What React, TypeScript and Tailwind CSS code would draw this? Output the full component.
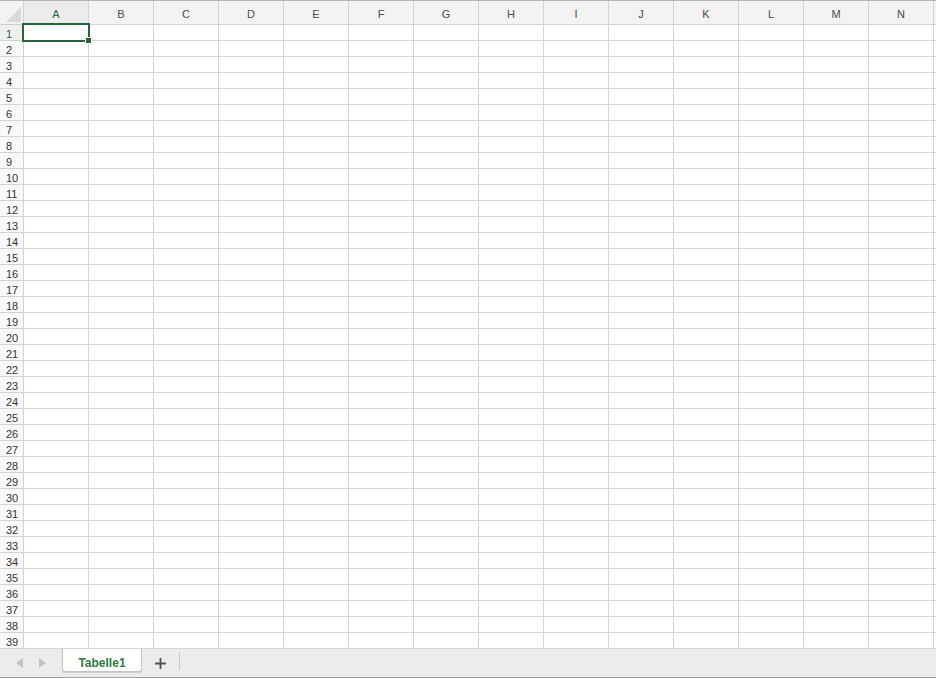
import React from "react";

const COLS = ["A","B","C","D","E","F","G","H","I","J","K","L","M","N",""];
const ROWS = Array.from({ length: 39 }, (_, i) => i + 1);

export default function App() {
  return (
    <div
      className="relative w-[936px] h-[678px] overflow-hidden bg-white flex flex-col"
      style={{ fontFamily: '"Liberation Sans", Arial, sans-serif' }}
    >
      {/* header row */}
      <div className="flex h-[25px] shrink-0 border-t border-[#b4b4b4] bg-[#f3f3f3]">
        <div className="relative w-[24px] shrink-0 border-r border-b border-[#cfcfcf] bg-[#f3f3f3]">
          <svg className="absolute right-[2px] bottom-[2px]" width="15" height="15" viewBox="0 0 15 15">
            <polygon points="15,0 15,15 0,15" fill="#d9d9d9" />
          </svg>
        </div>
        {COLS.map((c, i) => (
          <div
            key={i}
            className={`w-[65px] shrink-0 border-r border-b border-[#d2d2d2] flex items-center justify-center pt-[3px] text-[11px] ${
              i === 0 ? "text-[#22663a] bg-[#ececec]" : "text-[#4a4a4a]"
            }`}
          >
            {c}
          </div>
        ))}
      </div>

      {/* rows */}
      <div className="flex flex-col shrink-0">
        {ROWS.map((r) => (
          <div key={r} className="flex h-[16px]">
            <div
              className={`w-[24px] shrink-0 border-r border-b border-[#d2d2d2] flex items-center pl-[6px] pt-[3px] text-[11px] leading-none ${
                r === 1 ? "text-[#22663a] bg-[#efefef]" : "text-[#333] bg-[#f9f9f9]"
              }`}
            >
              {r}
            </div>
            {COLS.map((c, i) => (
              <div key={i} className="w-[65px] shrink-0 border-r border-b border-[#d6d6d6]" />
            ))}
          </div>
        ))}
      </div>

      {/* tab bar */}
      <div className="flex-1 bg-[#ececec] border-b border-[#9e9e9e] flex items-start relative">
        <div className="flex items-center h-[28px] w-[62px] shrink-0 pl-[16px] gap-[14px]">
          <svg width="8" height="10" viewBox="0 0 8 10">
            <polygon points="7,0 7,10 0,5" fill="#c2c2c2" />
          </svg>
          <svg width="8" height="10" viewBox="0 0 8 10">
            <polygon points="1,0 1,10 8,5" fill="#c2c2c2" />
          </svg>
        </div>
        <div className="w-[80px] h-[23px] shrink-0 bg-white border-x border-b border-[#c4c4c4] rounded-b-[3px] shadow-[0_1px_1px_rgba(0,0,0,0.15)] flex items-center justify-center pt-[5px] text-[12px] font-bold text-[#2b7a43]">
          Tabelle1
        </div>
        <div className="w-[37px] h-[28px] shrink-0 flex items-center justify-center">
          <svg width="11" height="11" viewBox="0 0 11 11">
            <path d="M5.5 0v11M0 5.5h11" stroke="#505050" strokeWidth="1.8" />
          </svg>
        </div>
        <div className="w-px h-[18px] mt-[3px] bg-[#c8c8c8]" />
      </div>
      <div className="h-px shrink-0 bg-[#e6e6e6]" />

      {/* selection */}
      <div className="absolute left-[22px] top-[23px] w-[68px] h-[19px] border-2 border-[#22663a]" />
      <div className="absolute left-[85px] top-[37px] w-[7px] h-[7px] bg-[#22663a] border border-white" />
    </div>
  );
}
